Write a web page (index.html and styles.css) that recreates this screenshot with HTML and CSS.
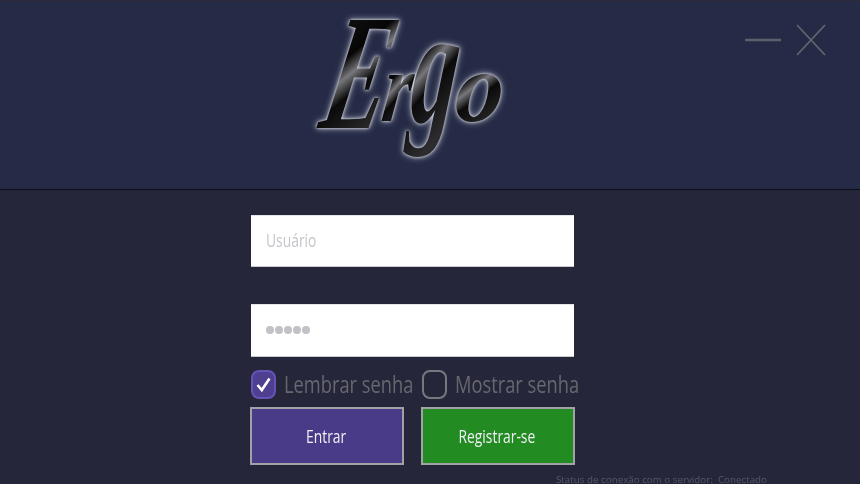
FILE: index.html
```html
<!DOCTYPE html>
<html lang="pt">
<head>
<meta charset="utf-8">
<title>Ergo</title>
<link rel="stylesheet" href="styles.css">
</head>
<body>
<div class="app">
  <header class="header">
    <svg class="logo" width="210" height="185" viewBox="0 0 210 185">
      <defs>
        <linearGradient id="gloss" x1="0" y1="0" x2="0.35" y2="1">
          <stop offset="0" stop-color="#8f8f94"/>
          <stop offset=".2" stop-color="#101011"/>
          <stop offset=".45" stop-color="#060606"/>
          <stop offset=".56" stop-color="#77777c"/>
          <stop offset=".68" stop-color="#0a0a0a"/>
          <stop offset="1" stop-color="#2c2c2e"/>
        </linearGradient>
      </defs>
      <text class="logo-text logo-e" fill="url(#gloss)" transform="translate(5 127) skewX(-12) scale(.58 1)">E</text>
      <text class="logo-text logo-small" fill="url(#gloss)" transform="translate(68 120) skewX(-8) scale(.72 1)">r</text>
      <text class="logo-text logo-g" fill="url(#gloss)" transform="translate(96 121) skewX(-6) scale(.56 1)">g</text>
      <text class="logo-text logo-small" fill="url(#gloss)" transform="translate(141 120) skewX(-6) scale(.96 1)">o</text>
    </svg>
    <div class="window-controls">
      <svg class="win-icon" width="36" height="4" viewBox="0 0 36 4"><path d="M0 2H36" stroke="#5c5f6c" stroke-width="2.4"/></svg>
      <svg class="win-icon" width="30" height="32" viewBox="0 0 30 32"><path d="M1 1L29 31M29 1L1 31" stroke="#62646f" stroke-width="1.8"/></svg>
    </div>
  </header>
  <main class="main">
    <div class="form">
      <div class="field"><span class="squeeze placeholder">Usuário</span></div>
      <div class="field"><span class="dots"><i></i><i></i><i></i><i></i><i></i></span></div>
      <div class="options">
        <span class="check check-on">
          <svg width="17" height="17" viewBox="0 0 17 17"><path d="M2.5 9L6.8 14L14.5 2.5" fill="none" stroke="#fff" stroke-width="2.6"/></svg>
        </span>
        <span class="squeeze option-label">Lembrar senha</span>
        <span class="check"></span>
        <span class="squeeze option-label">Mostrar senha</span>
      </div>
      <div class="buttons">
        <div class="btn btn-purple"><span class="squeeze">Entrar</span></div>
        <div class="btn btn-green"><span class="squeeze">Registrar-se</span></div>
      </div>
      <div class="status">Status de conexão com o servidor:&nbsp; Conectado</div>
    </div>
  </main>
</div>
</body>
</html>
```
FILE: styles.css
```css
* { box-sizing: border-box; }
html, body { margin: 0; padding: 0; height: 100%; overflow: hidden; background: #25263a; }
body { font-family: "Open Sans", "Noto Sans", sans-serif; }
.app { width: 860px; height: 484px; display: flex; flex-direction: column; overflow: hidden; }

.header {
  height: 190px; flex: none; background: #252b46;
  border-top: 1px solid #2e2c38; border-bottom: 1px solid #0c0d18;
  display: flex; justify-content: space-between; align-items: flex-start;
}
.logo {
  display: block; margin-left: 312px; overflow: visible;
  filter: drop-shadow(0 0 1.5px #e6e8f0) drop-shadow(0 0 3px #a4a7b8);
}
.logo-text { font-family: "Liberation Serif", serif; font-style: italic; font-weight: 700; }
.logo-e { font-size: 165px; }
.logo-small { font-size: 100px; }
.logo-g { font-size: 165px; }

.window-controls { display: flex; align-items: center; gap: 15px; margin: 23px 34px 0 0; }
.win-icon { display: block; }

.main { flex: 1; padding: 25px 0 0 250px; }
.form { width: 325px; }
.field {
  width: 323px; height: 52px; margin-left: 1px; background: #fff;
  border-top: 1px solid #e4e5ea; border-bottom: 1px solid #c9cbd2;
  display: flex; align-items: center; padding: 0 0 2px 15px; margin-bottom: 37px;
}
.field + .field { margin-bottom: 0; height: 53px; }
.squeeze { display: inline-block; transform-origin: 0 50%; white-space: nowrap; }
.placeholder { font-size: 19px; color: #c3c5c9; transform: scaleX(.73); filter: blur(.3px); }
.dots { display: flex; gap: 1.5px; }
.dots i { width: 7.5px; height: 8px; border-radius: 50%; background: #c2c1c6; }

.options { display: flex; align-items: center; height: 34px; margin-top: 10px; padding-left: 1px; }
.check {
  width: 25px; height: 29px; flex: none; border-radius: 8px; border: 2px solid #77787f;
  display: flex; align-items: center; justify-content: center;
}
.check-on { background: #4f3f91; border: 2px solid #6553b5; }
.option-label { font-size: 23px; line-height: 30px; color: #67686f; margin-left: 8px; width: 138px; transform: scaleX(.795); filter: blur(.2px); }
.option-label:last-child { width: 125px; }

.buttons { display: flex; gap: 17px; margin-top: 6px; }
.btn {
  width: 154px; height: 58px; display: flex; align-items: center; justify-content: center;
  border: 2px solid #a2a2a6; color: #f1f1f5; font-size: 18px; padding: 0 2px 1px 0;
}
.btn .squeeze { transform-origin: 50% 50%; transform: scaleX(.77); }
.btn-purple { background: #4a3b88; }
.btn-green { background: #228b22; }

.status {
  margin: 9px 0 0 306px; width: 240px; height: 10px; white-space: nowrap;
  font-size: 9.8px; line-height: 12px; color: #565865; filter: blur(.4px);
}
```
